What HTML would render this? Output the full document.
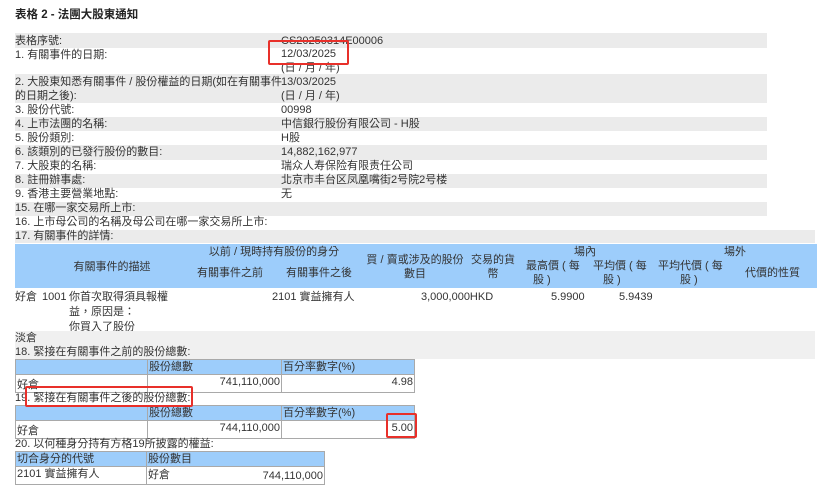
<!DOCTYPE html>
<html><head><meta charset="utf-8"><style>
*{margin:0;padding:0;box-sizing:border-box}
body{width:831px;height:484px;overflow:hidden;background:#fff;font-family:"Liberation Sans","Noto Sans CJK TC",sans-serif;font-size:11px;color:#333;position:relative}
.a{position:absolute;white-space:nowrap;line-height:14px}
.g{position:absolute;background:#ebebeb}
.b{position:absolute;background:#9dcdfb}
.r{position:absolute;border:2px solid #e8302a;border-radius:2px}
.c{text-align:center}
.t{position:absolute;border-collapse:collapse}
.t td{border:1px solid #a9a9a9;height:15px;line-height:14px;padding:0 1px;vertical-align:top}
.t tr.h td{background:#9dcdfb}
</style></head><body>
<div class="a" style="left:15px;top:8px;font-weight:bold;color:#222;font-size:11.5px">表格 2 - 法團大股東通知</div>

<div class="g" style="left:15px;top:33px;width:752px;height:15px"></div>
<div class="g" style="left:15px;top:74px;width:752px;height:29px"></div>
<div class="g" style="left:15px;top:117px;width:752px;height:14px"></div>
<div class="g" style="left:15px;top:145px;width:752px;height:15px"></div>
<div class="g" style="left:15px;top:174px;width:752px;height:14px"></div>
<div class="g" style="left:15px;top:202px;width:752px;height:14px"></div>
<div class="g" style="left:15px;top:230px;width:800px;height:13px"></div>

<div class="a" style="left:15px;top:34px">表格序號:</div><div class="a" style="left:281px;top:34px">CS20250314E00006</div>
<div class="a" style="left:15px;top:48px">1. 有關事件的日期:</div><div class="a" style="left:281px;top:47px">12/03/2025</div>
<div class="a" style="left:281px;top:61px">(日 / 月 / 年)</div>
<div class="a" style="left:15px;top:75px">2. 大股東知悉有關事件 / 股份權益的日期(如在有關事件</div><div class="a" style="left:281px;top:75px">13/03/2025</div>
<div class="a" style="left:15px;top:89px">的日期之後):</div><div class="a" style="left:281px;top:89px">(日 / 月 / 年)</div>
<div class="a" style="left:15px;top:103px">3. 股份代號:</div><div class="a" style="left:281px;top:103px">00998</div>
<div class="a" style="left:15px;top:117px">4. 上市法團的名稱:</div><div class="a" style="left:281px;top:117px">中信銀行股份有限公司 - H股</div>
<div class="a" style="left:15px;top:131px">5. 股份類別:</div><div class="a" style="left:281px;top:131px">H股</div>
<div class="a" style="left:15px;top:145px">6. 該類別的已發行股份的數目:</div><div class="a" style="left:281px;top:145px">14,882,162,977</div>
<div class="a" style="left:15px;top:159px">7. 大股東的名稱:</div><div class="a" style="left:281px;top:159px">瑞众人寿保险有限责任公司</div>
<div class="a" style="left:15px;top:173px">8. 註冊辦事處:</div><div class="a" style="left:281px;top:173px">北京市丰台区凤凰嘴街2号院2号楼</div>
<div class="a" style="left:15px;top:187px">9. 香港主要營業地點:</div><div class="a" style="left:281px;top:187px">无</div>
<div class="a" style="left:15px;top:201px">15. 在哪一家交易所上市:</div>
<div class="a" style="left:15px;top:215px">16. 上市母公司的名稱及母公司在哪一家交易所上市:</div>
<div class="a" style="left:15px;top:229px">17. 有關事件的詳情:</div>

<div class="b" style="left:15px;top:244px;width:802px;height:44px"></div>
<div class="a c" style="left:60px;top:260px;width:104px">有關事件的描述</div>
<div class="a c" style="left:200px;top:245px;width:148px">以前 / 現時持有股份的身分</div>
<div class="a c" style="left:190px;top:266px;width:80px">有關事件之前</div>
<div class="a c" style="left:279px;top:266px;width:80px">有關事件之後</div>
<div class="a c" style="left:360px;top:253px;width:110px">買 / 賣或涉及的股份</div>
<div class="a c" style="left:360px;top:267px;width:110px">數目</div>
<div class="a c" style="left:468px;top:253px;width:50px">交易的貨</div>
<div class="a c" style="left:468px;top:267px;width:50px">幣</div>
<div class="a c" style="left:560px;top:245px;width:50px">場內</div>
<div class="a" style="left:526px;top:259px">最高價 ( 每</div>
<div class="a" style="left:533px;top:273px">股 )</div>
<div class="a" style="left:593px;top:259px">平均價 ( 每</div>
<div class="a" style="left:603px;top:273px">股 )</div>
<div class="a" style="left:658px;top:259px">平均代價 ( 每</div>
<div class="a" style="left:680px;top:273px">股 )</div>
<div class="a c" style="left:710px;top:245px;width:50px">場外</div>
<div class="a" style="left:745px;top:266px">代價的性質</div>

<div class="a" style="left:15px;top:290px">好倉</div>
<div class="a" style="left:42px;top:290px">1001</div>
<div class="a" style="left:69px;top:290px;line-height:15px">你首次取得須具報權<br>益，原因是：<br>你買入了股份</div>
<div class="a" style="left:272px;top:290px">2101 實益擁有人</div>
<div class="a" style="left:421px;top:290px">3,000,000HKD</div>
<div class="a" style="left:551px;top:290px">5.9900</div>
<div class="a" style="left:619px;top:290px">5.9439</div>

<div class="g" style="left:15px;top:331px;width:800px;height:28px;background:#f0f0f0"></div>
<div class="a" style="left:15px;top:331px">淡倉</div>
<div class="a" style="left:15px;top:345px">18. 緊接在有關事件之前的股份總數:</div>
<table class="t" style="left:15px;top:359px;width:400px">
<tr class="h"><td style="width:132px"></td><td style="width:134px">股份總數</td><td>百分率數字(%)</td></tr>
<tr><td style="height:18px;vertical-align:bottom">好倉</td><td style="text-align:right">741,110,000</td><td style="text-align:right">4.98</td></tr>
</table>
<div class="a" style="left:15px;top:391px">19. 緊接在有關事件之後的股份總數:</div>
<table class="t" style="left:15px;top:405px;width:400px">
<tr class="h"><td style="width:132px"></td><td style="width:134px">股份總數</td><td>百分率數字(%)</td></tr>
<tr><td style="height:18px;vertical-align:bottom">好倉</td><td style="text-align:right">744,110,000</td><td style="text-align:right">5.00</td></tr>
</table>
<div class="a" style="left:15px;top:437px">20. 以何種身分持有方格19所披露的權益:</div>
<table class="t" style="left:15px;top:451px;width:310px">
<tr class="h"><td style="width:131px">切合身分的代號</td><td>股份數目</td></tr>
<tr><td style="height:18px">2101 實益擁有人</td><td style="vertical-align:bottom"><span style="float:right;line-height:16px">744,110,000</span>好倉</td></tr>
</table>

<div class="r" style="left:268px;top:40px;width:81px;height:25px"></div>
<div class="r" style="left:25px;top:386px;width:168px;height:21px"></div>
<div class="r" style="left:386px;top:413px;width:31px;height:25px"></div>
</body></html>
